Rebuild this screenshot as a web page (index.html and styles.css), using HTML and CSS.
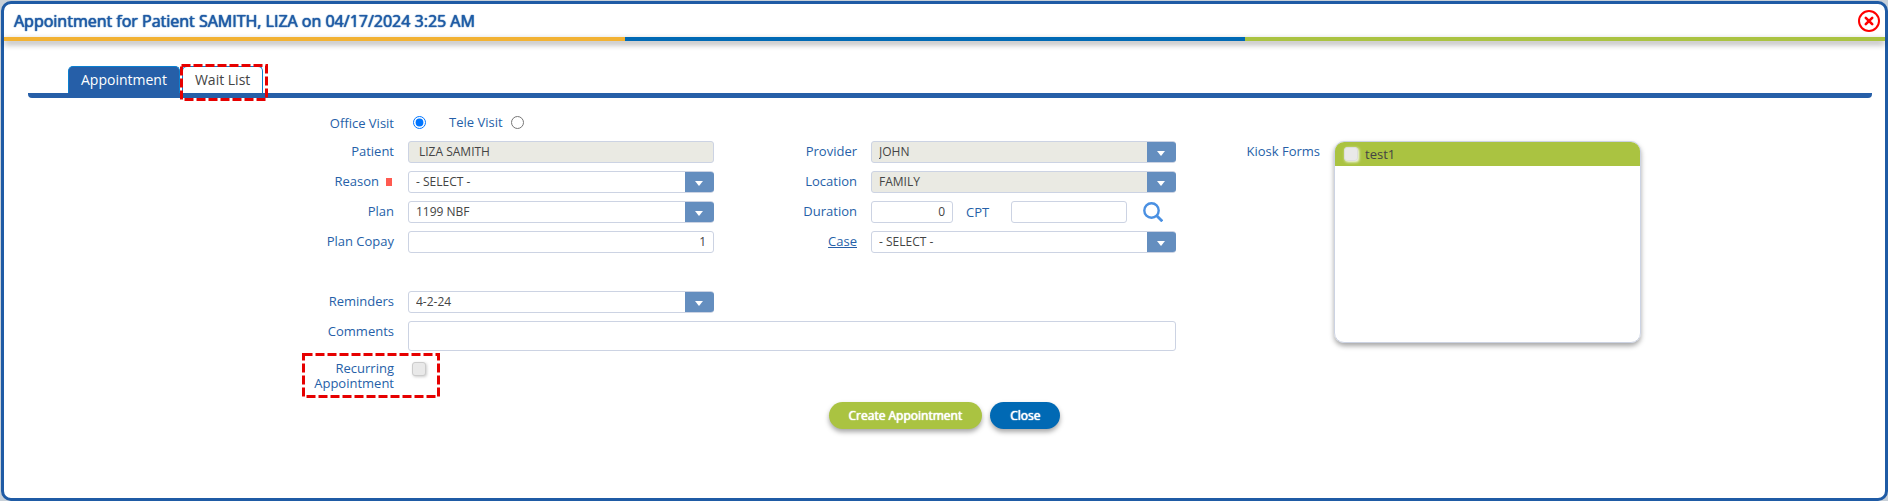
FILE: index.html
```html
<!DOCTYPE html>
<html lang="en">
<head>
    <meta charset="UTF-8">
    <meta name="viewport" content="width=device-width, initial-scale=1.0">
    <title>Appointment</title>
    <link rel="stylesheet" href="styles.css">
</head>
<body>
    <div class="modal">
        <div class="modal-header">
            <h1>Appointment for Patient SAMITH, LIZA on 04/17/2024 3:25 AM</h1>
            <button type="button" class="close-icon" aria-label="Close window">
                <svg width="22" height="22" viewBox="0 0 22 22" fill="none" stroke="#f00">
                    <circle cx="11" cy="11" r="10" stroke-width="2"/>
                    <path d="M7.8 7.8l6.4 6.4M14.2 7.8l-6.4 6.4" stroke-width="2.6" stroke-linecap="round"/>
                </svg>
            </button>
        </div>
        <div class="stripe"><span class="orange"></span><span class="blue"></span><span class="green"></span></div>

        <div class="modal-body">
            <div class="tabs">
                <button type="button" class="tab active">Appointment</button>
                <div class="tab-mark">
                    <button type="button" class="tab">Wait List</button>
                    <svg class="mark" width="88" height="37"><rect x="1.5" y="1.5" width="85" height="34"/></svg>
                </div>
            </div>

            <form class="form">
                <label class="lbl office c1 r1" for="office">Office Visit</label>
                <div class="visit c2 r1">
                    <input type="radio" name="visit" id="office" checked>
                    <label for="tele">Tele Visit</label>
                    <input type="radio" name="visit" id="tele">
                </div>

                <label class="lbl c1 r2" for="patient">Patient</label>
                <input class="field patient c2 r2" type="text" id="patient" value="LIZA SAMITH" readonly>

                <label class="lbl c1 r3" for="reason">Reason<span class="required"></span></label>
                <div class="select c2 r3"><select class="field" id="reason"><option>- SELECT -</option></select></div>

                <label class="lbl c1 r4" for="plan">Plan</label>
                <div class="select c2 r4"><select class="field" id="plan"><option>1199 NBF</option></select></div>

                <label class="lbl c1 r5" for="copay">Plan Copay</label>
                <input class="field num c2 r5" type="text" id="copay" value="1">

                <label class="lbl c1 r7" for="reminders">Reminders</label>
                <div class="select c2 r7"><select class="field" id="reminders"><option>4-2-24</option></select></div>

                <label class="lbl c1 r8" for="comments">Comments</label>
                <textarea class="field comments r8" id="comments"></textarea>

                <label class="lbl recurring c1 r9" for="recurring">Recurring<br>Appointment
                    <svg class="mark" width="138" height="45"><rect x="1.5" y="1.5" width="135" height="42"/></svg>
                </label>
                <div class="recurring-check c2 r9"><input type="checkbox" class="check" id="recurring"></div>

                <label class="lbl c3 r2" for="provider">Provider</label>
                <div class="select c4 r2"><select class="field locked" id="provider"><option>JOHN</option></select></div>

                <label class="lbl c3 r3" for="location">Location</label>
                <div class="select c4 r3"><select class="field locked" id="location"><option>FAMILY</option></select></div>

                <label class="lbl c3 r4" for="duration">Duration</label>
                <div class="duration c4 r4">
                    <input class="field num" type="text" id="duration" value="0">
                    <label for="cpt">CPT</label>
                    <input class="field" type="text" id="cpt">
                    <button type="button" class="search" aria-label="Search CPT">
                        <svg width="20" height="20" viewBox="0 0 20 20" fill="none" stroke="#4a90e2">
                            <circle cx="8.5" cy="8.5" r="7.2" stroke-width="2.4"/>
                            <path d="M13.5 13.5l5.8 5.8" stroke-width="2.8"/>
                        </svg>
                    </button>
                </div>

                <a class="lbl case c3 r5" href="#">Case</a>
                <div class="select c4 r5"><select class="field" id="case" aria-label="Case"><option>- SELECT -</option></select></div>

                <span class="lbl c5 r2" id="kioskLabel">Kiosk Forms</span>
                <div class="kiosk" role="group" aria-labelledby="kioskLabel">
                    <div class="kiosk-item">
                        <input type="checkbox" class="check" id="test1">
                        <label for="test1">test1</label>
                    </div>
                </div>
            </form>

            <div class="actions">
                <button type="button" class="btn btn-create">Create Appointment</button>
                <button type="button" class="btn btn-close">Close</button>
            </div>
        </div>
    </div>
</body>
</html>
```

FILE: styles.css
```css
* { box-sizing: border-box; }
body { margin: 0; padding: 1px 0 0 1px; min-height: 100vh; display: flex; background: #c8d0d8; font-family: "Open Sans", Arial, sans-serif; font-size: 13px; color: #444; }
button, input, select, textarea { font-family: inherit; margin: 0; }
svg { display: block; }

.modal { flex: 1; background: #fff; border: 3px solid #1f5ba5; border-radius: 10px; }
.modal-header { display: flex; justify-content: space-between; align-items: center; height: 33px; padding: 0 5px 0 10px; }
.modal-header h1 { margin: 0; font-size: 16px; line-height: 22px; font-weight: 400; color: #1f5ba5; text-shadow: 0 0 1px #1f5ba5, 0 0 1px #1f5ba5; }
.close-icon, .search { padding: 0; border: 0; background: none; cursor: pointer; }

.stripe { display: flex; height: 4px; box-shadow: 0 3px 6px rgba(0,0,0,0.4); }
.stripe span { flex: 33; }
.stripe .orange { background: #f2b233; }
.stripe .blue { background: #0069b4; }
.stripe .green { flex: 34; background: #aac341; }

.modal-body { padding: 25px 13px 20px 24px; }

/* tabs */
.tabs { display: flex; gap: 2px; padding-left: 40px; border-bottom: 5px solid #265fa8; border-radius: 0 0 4px 4px; }
.tab { height: 27px; padding: 0 12px 2px; border: 1px solid #0a7fd0; border-bottom: 0; border-radius: 5px 5px 0 0; background: #fff; font-size: 14px; color: #444; cursor: pointer; }
.tab.active { background: #265fa8; color: #fff; }
.tab-mark { position: relative; }
.mark { position: absolute; top: -2px; left: -2px; pointer-events: none; }
.mark rect { fill: none; stroke: #e60000; stroke-width: 3; stroke-dasharray: 9 3; }

/* form grid */
.form { display: grid; grid-template-columns: 366fr 306fr 129fr 305fr 130fr 307fr 217fr; grid-template-rows: repeat(7, 22px) 30px auto; gap: 8px 14px; padding-top: 13px; }
.form > * { min-width: 0; }
.c1 { grid-column: 1; }
.c2 { grid-column: 2; }
.c3 { grid-column: 3; }
.c4 { grid-column: 4; }
.c5 { grid-column: 5; }
.r1 { grid-row: 1; }
.r2 { grid-row: 2; }
.r3 { grid-row: 3; }
.r4 { grid-row: 4; }
.r5 { grid-row: 5; }
.r7 { grid-row: 7; }
.r8 { grid-row: 8; }
.r9 { grid-row: 9; }

.lbl, .visit label, .duration label { color: #265fa8; line-height: 20px; }
.lbl { text-align: right; }
.lbl.office { line-height: 24px; }
.required { display: inline-block; width: 6px; height: 8px; margin: 0 2px 0 7px; background: #ff5a50; }
.case { text-decoration: underline; }

.field { display: block; width: 100%; height: 22px; padding: 0 7px 1px; border: 1px solid #ccd3e3; border-radius: 3px; background: #fff; font-size: 12px; color: #444; outline: none; }
.patient { padding: 0 10px 1px; background: #eaeae3; }
.locked { background: #eaeae3; }
.num { text-align: right; }
.comments { grid-column: 2 / 5; height: 30px; resize: none; }

.select { position: relative; }
.select select { appearance: none; }
.select::before { content: ""; position: absolute; top: 1px; right: 0; width: 29px; height: 20px; border-radius: 0 3px 3px 0; background: #648ebf; pointer-events: none; }
.select::after { content: ""; position: absolute; top: 10px; right: 11px; border: 4px solid transparent; border-top: 5px solid #fff; border-bottom: 0; pointer-events: none; }

.visit { display: flex; align-items: center; }
.visit input { width: 13px; height: 13px; }
.visit #office { margin: 0 23px 0 5px; }
.visit #tele { margin-left: 8px; }

.duration { display: flex; align-items: center; }
.duration #duration { width: 82px; }
.duration label { width: 58px; padding-left: 13px; }
.duration #cpt { width: 116px; }
.search { margin-left: 16px; }

.check { appearance: none; display: block; width: 14px; height: 14px; border: 1px solid #ccc; border-radius: 3px; background: #e9e9e9; box-shadow: 1px 1px 3px rgba(0,0,0,0.2); }
.recurring { position: relative; padding-top: 2px; line-height: 15px; }
.recurring .mark { top: -6px; left: auto; right: -46px; }
.recurring-check { padding: 3px 0 0 4px; }

.kiosk { grid-column: 6; grid-row: 2 / 9; height: 202px; border: 1px solid #ccd3e3; border-radius: 10px; box-shadow: 0 3px 5px rgba(0,0,0,0.35); overflow: hidden; }
.kiosk-item { display: flex; align-items: center; gap: 7px; height: 24px; padding-left: 9px; background: #aac341; }
.kiosk-item .check { border-color: #ddd; box-shadow: 1px 1px 3px #fff; }

.actions { display: flex; justify-content: center; gap: 8px; padding: 11px 11px 0 0; }
.btn { height: 27px; padding: 0 20px; border: 0; border-radius: 14px; font-size: 12px; font-weight: 400; color: #fff; text-shadow: 0 0 1px #fff, 0 0 1px #fff; box-shadow: 0 3px 5px rgba(0,0,0,0.35); cursor: pointer; }
.btn-create { background: #aac341; }
.btn-close { background: #0069b4; }
```
